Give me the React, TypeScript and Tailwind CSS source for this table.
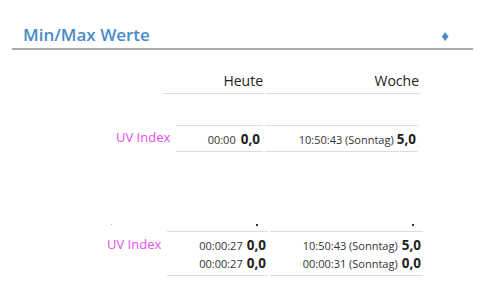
export default function App() {
  return (
    <div className="w-[485px] h-[295px] bg-white font-['Open_Sans',sans-serif] text-[#222] overflow-hidden">
      <div className="mx-3 pt-[23px] pb-[1px] border-b-2 border-[#aaa] flex items-center justify-between pl-[11px] pr-[24px]">
        <h2 className="text-[17px] leading-[24px] font-semibold text-[#4a8bc6]">Min/Max Werte</h2>
        <span className="text-[15px] leading-[24px] text-[#4a8bc6]">♦</span>
      </div>

      {/* Tabelle 1 */}
      <div className="mt-[21px] ml-[163px] flex gap-[2px] text-[14px] leading-[20px]">
        <div className="w-[101px] text-right pr-[1px] pb-[2px] border-b border-[#ddd]">Heute</div>
        <div className="w-[154px] text-right pr-[1px] pb-[2px] border-b border-[#ddd]">Woche</div>
      </div>

      <div className="mt-[31px] flex">
        <div className="ml-[116px] w-[60px] pt-[2px] text-[13px] leading-[20px] text-[#e550e5]">UV Index</div>
        <div className="w-[87px] h-[27px] border-y border-[#ddd] text-right pr-[3px] pt-[2px] leading-[20px]">
          <span className="text-[11px] text-[#333]">00:00</span>
          <span className="ml-[5px] text-[13.5px] font-bold">0,0</span>
        </div>
        <div className="ml-[2px] w-[153px] h-[27px] border-y border-[#ddd] text-right pr-[2px] pt-[2px] leading-[20px]">
          <span className="text-[11px] text-[#333]">10:50:43 (Sonntag)</span>
          <span className="ml-[3px] text-[13.5px] font-bold">5,0</span>
        </div>
      </div>

      {/* Tabelle 2 */}
      <div className="mt-[72px] flex h-[2px]">
        <span className="ml-[111px] w-[1px] h-[1px] bg-[#9cc]" />
        <span className="ml-[144px] w-[2px] h-[2px] bg-[#333]" />
        <span className="ml-[154px] w-[2px] h-[2px] bg-[#333]" />
      </div>

      <div className="mt-[5px] flex">
        <div className="ml-[107px] w-[60px] pt-[4px] text-[13px] leading-[18px] text-[#e550e5]">UV Index</div>
        <div className="w-[101px] border-y border-[#ddd] pr-[2px] pt-[4px] pb-[3px]">
          <div className="h-[18px] flex justify-end items-baseline gap-[4px]">
            <span className="text-[11px] leading-[18px] text-[#333]">00:00:27</span>
            <span className="text-[13.5px] leading-[18px] font-bold">0,0</span>
          </div>
          <div className="h-[18px] flex justify-end items-baseline gap-[4px]">
            <span className="text-[11px] leading-[18px] text-[#333]">00:00:27</span>
            <span className="text-[13.5px] leading-[18px] font-bold">0,0</span>
          </div>
        </div>
        <div className="ml-[2px] w-[153px] border-y border-[#ddd] pr-[2px] pt-[4px] pb-[3px]">
          <div className="h-[18px] flex justify-end items-baseline gap-[4px]">
            <span className="text-[11px] leading-[18px] text-[#333]">10:50:43 (Sonntag)</span>
            <span className="text-[13.5px] leading-[18px] font-bold">5,0</span>
          </div>
          <div className="h-[18px] flex justify-end items-baseline gap-[4px]">
            <span className="text-[11px] leading-[18px] text-[#333]">00:00:31 (Sonntag)</span>
            <span className="text-[13.5px] leading-[18px] font-bold">0,0</span>
          </div>
        </div>
      </div>
    </div>
  );
}
